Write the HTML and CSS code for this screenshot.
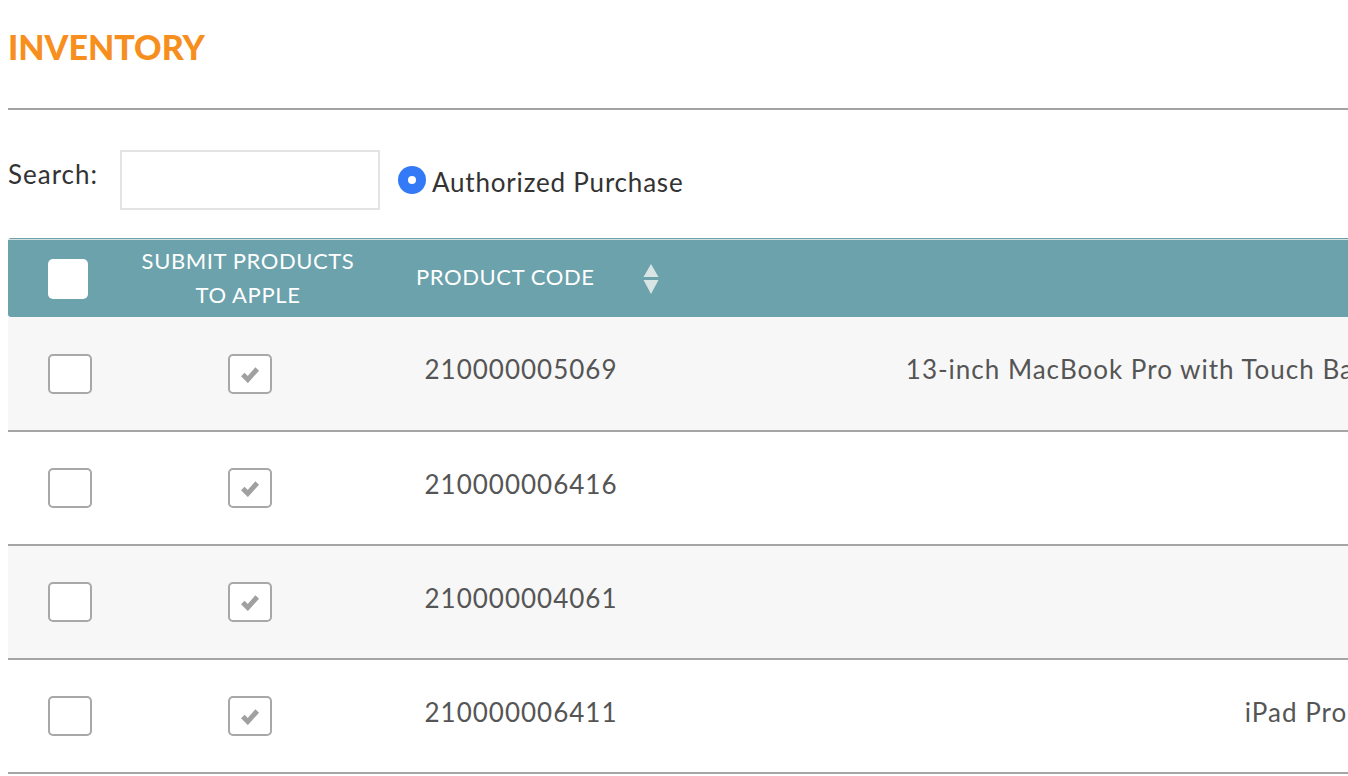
FILE: index.html
```html
<html>
<head>
<title>Inventory</title>
<meta charset="utf-8">
<link rel="stylesheet" href="styles.css">
</head>
<body>
<div class="page">
    <h1 class="title">INVENTORY</h1>
    <hr class="rule">

    <div class="search-row">
        <label class="search-label">Search:</label>
        <input class="search-box" type="text">
        <span class="radio"><span class="radio-dot"></span></span>
        <span class="radio-label">Authorized Purchase</span>
    </div>

    <table class="inventory">
        <colgroup>
            <col style="width: 122px">
            <col style="width: 236px">
            <col style="width: 310px">
            <col>
        </colgroup>
        <thead>
        <tr>
            <th class="col-sel"><span class="head-check"></span></th>
            <th class="col-submit">SUBMIT PRODUCTS<br>TO APPLE</th>
            <th class="col-code">PRODUCT CODE<svg class="sort" width="16" height="32" viewBox="0 0 16 32">
                    <path d="M8 1 L15.5 14 L0.5 14 Z" fill="#d9e4e5"/>
                    <path d="M8 31 L15.5 17 L0.5 17 Z" fill="#d9e4e5"/>
                </svg></th>
            <th class="col-desc"></th>
        </tr>
        </thead>
        <tbody>
        <tr class="odd">
            <td class="col-sel"><span class="box"></span></td>
            <td class="col-submit"><span class="box"><svg class="tick" width="20" height="18" viewBox="0 0 18 16"><path d="M2.5 8.5 L7 13 L15.5 3.5" stroke="#a0a0a0" stroke-width="4.4" fill="none"/></svg></span></td>
            <td class="col-code">210000005069</td>
            <td class="col-desc">13-inch MacBook Pro with Touch Bar and Touch ID - Silver (US)</td>
        </tr>
        <tr>
            <td class="col-sel"><span class="box"></span></td>
            <td class="col-submit"><span class="box"><svg class="tick" width="20" height="18" viewBox="0 0 18 16"><path d="M2.5 8.5 L7 13 L15.5 3.5" stroke="#a0a0a0" stroke-width="4.4" fill="none"/></svg></span></td>
            <td class="col-code">210000006416</td>
            <td class="col-desc"></td>
        </tr>
        <tr class="odd">
            <td class="col-sel"><span class="box"></span></td>
            <td class="col-submit"><span class="box"><svg class="tick" width="20" height="18" viewBox="0 0 18 16"><path d="M2.5 8.5 L7 13 L15.5 3.5" stroke="#a0a0a0" stroke-width="4.4" fill="none"/></svg></span></td>
            <td class="col-code">210000004061</td>
            <td class="col-desc"></td>
        </tr>
        <tr>
            <td class="col-sel"><span class="box"></span></td>
            <td class="col-submit"><span class="box"><svg class="tick" width="20" height="18" viewBox="0 0 18 16"><path d="M2.5 8.5 L7 13 L15.5 3.5" stroke="#a0a0a0" stroke-width="4.4" fill="none"/></svg></span></td>
            <td class="col-code">210000006411</td>
            <td class="col-desc">iPad Pro</td>
        </tr>
        </tbody>
    </table>
</div>
</body>
</html>
```

FILE: styles.css
```css
html, body {
    margin: 0;
    padding: 0;
    overflow: hidden;
    background: white;
}

.page {
    padding: 0 0 0 8px;
    font-family: Lato, "Liberation Sans", sans-serif;
    color: #333;
}

.title {
    margin: 25px 0 0 0;
    font-size: 34px;
    line-height: 44px;
    font-weight: 900;
    color: #f78f1e;
}

.rule {
    margin: 39px 0 0 0;
    border: 0;
    height: 2px;
    background: #a3a3a3;
}

.search-row {
    display: flex;
    align-items: center;
    margin-top: 40px;
    height: 60px;
}

.search-label {
    font-size: 26px;
    letter-spacing: 1px;
    color: #333;
    margin-top: -12px;
    width: 112px;
}

.search-box {
    width: 260px;
    height: 60px;
    box-sizing: border-box;
    border: 2px solid #e3e3e3;
    margin: 0 18px 0 0;
}

.radio {
    width: 28px;
    height: 28px;
    border-radius: 50%;
    background: #3479f5;
    display: flex;
    align-items: center;
    justify-content: center;
    margin: 0 6px 0 0;
}

.radio-dot {
    width: 8px;
    height: 8px;
    border-radius: 50%;
    background: white;
}

.radio-label {
    font-size: 26px;
    letter-spacing: 0.8px;
    color: #333;
    margin-top: 4px;
}

.inventory {
    margin-top: 28px;
    border-collapse: collapse;
    width: 1908px;
    table-layout: fixed;
}

.inventory th {
    background: linear-gradient(#6ba2ac 0 1px, #d6dfe0 1px 2px, #6ba2ac 2px);
    color: white;
    font-weight: 400;
    font-size: 22px;
    letter-spacing: 0.6px;
    line-height: 34px;
    height: 79px;
    padding: 0;
}

.inventory th.col-sel {
    border-radius: 3px 0 0 3px;
    text-align: left;
}

.col-submit { text-align: center; }
.col-desc { text-align: center; }

th.col-code {
    text-align: left;
    padding-left: 50px !important;
    white-space: nowrap;
}

td.col-code {
    text-align: center;
}

.sort {
    vertical-align: middle;
    margin-left: 48px;
}

.head-check {
    display: block;
    margin: 2px 0 0 40px;
    width: 40px;
    height: 40px;
    border-radius: 5px;
    background: white;
}

.inventory td {
    height: 114px;
    padding: 0;
    font-size: 26px;
    letter-spacing: 1px;
    color: #555;
    border-bottom: 2px solid #a5a5a5;
    white-space: nowrap;
}

.inventory tr.odd td {
    background: #f7f7f7;
}

.inventory td.col-code,
.inventory td.col-desc {
    vertical-align: top;
    padding-top: 36px;
    height: 78px;
}

.box {
    display: inline-flex;
    align-items: center;
    justify-content: center;
    box-sizing: border-box;
    width: 44px;
    height: 40px;
    border: 2px solid #a8a8a8;
    border-radius: 5px;
    background: white;
    vertical-align: middle;
}

td.col-sel .box {
    margin-left: 40px;
}

td.col-submit .box {
    margin-left: 4px;
}
```
